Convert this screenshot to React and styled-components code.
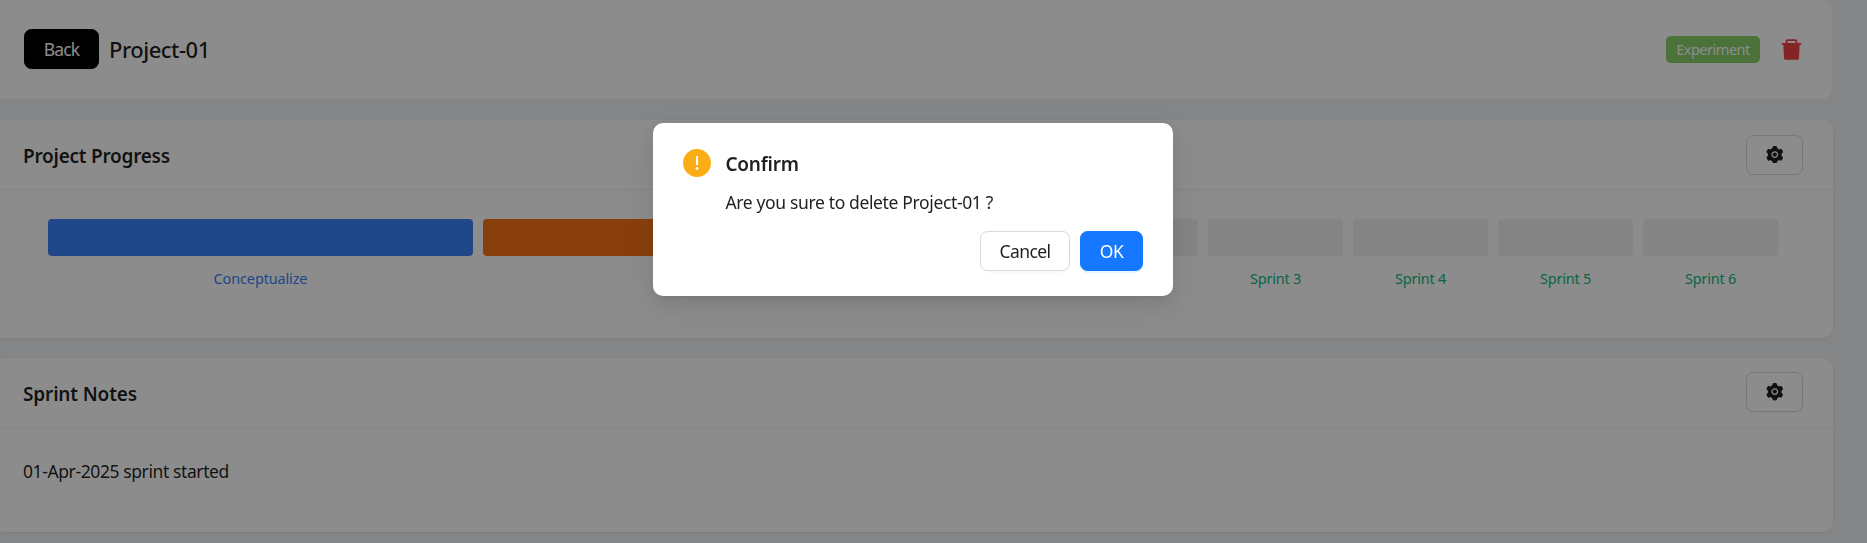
import React from "react";
import styled, { createGlobalStyle } from "styled-components";
import { AiFillDelete, AiFillSetting, AiFillExclamationCircle } from "react-icons/ai";

const GlobalStyle = createGlobalStyle`
  *, *::before, *::after { box-sizing: border-box; }
  body {
    margin: 0;
    height: 543px;
    overflow: hidden;
    background: #f0f2f5;
    color: rgba(0, 0, 0, 0.88);
    font-family: "Segoe UI", "Noto Sans", sans-serif;
    font-size: 17.5px;
  }
`;

const Page = styled.main`
  display: flex;
  flex-direction: column;
  height: 543px;
  padding-right: 34px;
  margin-left: -6px;
  overflow: hidden;
`;

const Card = styled.section`
  flex: none;
  height: ${(p) => p.$height}px;
  margin-bottom: 20px;
  background: #fff;
  border-radius: 10px;
  box-shadow: 0 1px 3px rgba(0, 0, 0, 0.03), 0 1px 7px -1px rgba(0, 0, 0, 0.02),
    0 2px 5px rgba(0, 0, 0, 0.02);
`;

const HeaderCard = styled(Card)`
  display: flex;
  align-items: center;
  margin-right: 1px;
  margin-bottom: 21px;
  padding: 0 29px 1px 30px;
  box-shadow: none;
`;

const Button = styled.button`
  display: inline-flex;
  align-items: center;
  justify-content: center;
  width: ${(p) => p.$width}px;
  height: 40px;
  padding: 0;
  border: 1px solid #d9d9d9;
  border-radius: 7.5px;
  background: #fff;
  box-shadow: 0 2px 0 rgba(0, 0, 0, 0.02);
  color: rgba(0, 0, 0, 0.88);
  font: inherit;
  letter-spacing: -0.55px;
`;

const GearButton = styled(Button)`
  padding-top: ${(p) => (p.$low ? 1 : 0)}px;
`;

const BackButton = styled(Button)`
  border-color: #000;
  background: #000;
  color: #fff;
  letter-spacing: -0.8px;
`;

const PrimaryButton = styled(Button)`
  border-color: #1677ff;
  background: #1677ff;
  box-shadow: 0 2px 0 rgba(5, 145, 255, 0.1);
  color: #fff;
`;

const ProjectName = styled.h1`
  flex: 1;
  margin: 0 0 0 10px;
  font-size: 22px;
  font-weight: 500;
  letter-spacing: -0.5px;
`;

const Tag = styled.span`
  display: inline-flex;
  align-items: center;
  justify-content: center;
  width: 94px;
  height: 27px;
  margin-right: 20px;
  padding-bottom: 1px;
  border-radius: 5px;
  background: #87d068;
  color: #fff;
  font-size: 14.5px;
  letter-spacing: -0.48px;
`;

const DeleteIcon = styled(AiFillDelete)`
  width: 23px;
  height: 23px;
  color: #ef4444;
`;

const GearIcon = styled(AiFillSetting)`
  width: 17.5px;
  height: 17.5px;
`;

const CardHead = styled.header`
  display: flex;
  align-items: center;
  justify-content: space-between;
  height: 70px;
  padding: 0 30px ${(p) => (p.$tight ? 2 : 0)}px 29px;
  border-bottom: 1px solid #f0f0f0;
`;

const CardTitle = styled.h2`
  margin: 0;
  padding-top: ${(p) => (p.$low ? 4 : 2)}px;
  font-size: 19px;
  font-weight: 600;
  letter-spacing: ${(p) => (p.$low ? -0.15 : -0.25)}px;
`;

const Stages = styled.div`
  display: grid;
  grid-template-columns: 425px 425px repeat(6, 135px);
  gap: 10px;
  padding: 29px 0 0 54px;
`;

const Stage = styled.div`
  color: ${(p) => p.$color};
  font-size: 14.5px;
  line-height: 22px;
  letter-spacing: ${(p) => p.$tracking}px;
  text-align: center;
`;

const Bar = styled.div`
  height: 37px;
  margin-bottom: 11px;
  border-radius: 4px;
  background: ${(p) => p.$fill};
`;

const Note = styled.p`
  margin: 0;
  padding: 30px 30px 0 29px;
  line-height: 27px;
  letter-spacing: -0.4px;
`;

const Mask = styled.div`
  position: fixed;
  inset: 0;
  display: flex;
  align-items: flex-start;
  justify-content: center;
  padding: 123px 41px 0 0;
  background: rgba(0, 0, 0, 0.45);
`;

const Dialog = styled.div`
  display: flex;
  flex-direction: column;
  width: 520px;
  height: 173px;
  padding: 26px 30px 25px;
  border-radius: 10px;
  background: #fff;
  box-shadow: 0 7.5px 20px rgba(0, 0, 0, 0.08), 0 4px 7.5px -5px rgba(0, 0, 0, 0.12),
    0 11px 35px 10px rgba(0, 0, 0, 0.05);
`;

const DialogBody = styled.div`
  display: flex;
  flex: 1;
  gap: 14.5px;
`;

const WarningIcon = styled(AiFillExclamationCircle)`
  flex: none;
  width: 28px;
  height: 28px;
  color: #faad14;
`;

const DialogTitle = styled.h3`
  margin: 0 0 10px;
  font-size: 19px;
  font-weight: 600;
  line-height: 30px;
  letter-spacing: -0.25px;
`;

const DialogText = styled.p`
  margin: 0;
  line-height: 27px;
  letter-spacing: -0.36px;
`;

const DialogActions = styled.footer`
  display: flex;
  justify-content: flex-end;
  gap: 10px;
`;

const ICON_BOX = "64 64 896 896";

const stages = [
  { id: "concept", name: "Conceptualize", color: "#3b82f6", fill: "#3b82f6", tracking: -0.15 },
  { id: "second", color: "#f97316", fill: "#f97316" },
  { id: "sprint1", fill: "#f0f0f0" },
  { id: "sprint2", fill: "#f0f0f0" },
  ...[3, 4, 5, 6].map((n) => ({
    id: `sprint${n}`,
    name: `Sprint ${n}`,
    color: "#10b981",
    fill: "#f0f0f0",
    tracking: -0.25,
  })),
];

function SettingsButton({ low }) {
  return (
    <GearButton $width={57} $low={low} aria-label="Settings">
      <GearIcon viewBox={ICON_BOX} />
    </GearButton>
  );
}

export default function App() {
  return (
    <>
      <GlobalStyle />
      <Page>
        <HeaderCard $height={99}>
          <BackButton $width={75}>Back</BackButton>
          <ProjectName>Project-01</ProjectName>
          <Tag>Experiment</Tag>
          <DeleteIcon viewBox={ICON_BOX} />
        </HeaderCard>
        <Card $height={218}>
          <CardHead>
            <CardTitle>Project Progress</CardTitle>
            <SettingsButton />
          </CardHead>
          <Stages>
            {stages.map((s) => (
              <Stage key={s.id} $color={s.color} $tracking={s.tracking || 0}>
                <Bar $fill={s.fill} />
                {s.name}
              </Stage>
            ))}
          </Stages>
        </Card>
        <Card $height={174}>
          <CardHead $tight>
            <CardTitle $low>Sprint Notes</CardTitle>
            <SettingsButton low />
          </CardHead>
          <Note>01-Apr-2025 sprint started</Note>
        </Card>
      </Page>
      <Mask>
        <Dialog role="dialog">
          <DialogBody>
            <WarningIcon viewBox={ICON_BOX} />
            <div>
              <DialogTitle>Confirm</DialogTitle>
              <DialogText>Are you sure to delete Project-01 ?</DialogText>
            </div>
          </DialogBody>
          <DialogActions>
            <Button $width={90}>Cancel</Button>
            <PrimaryButton $width={63}>OK</PrimaryButton>
          </DialogActions>
        </Dialog>
      </Mask>
    </>
  );
}
